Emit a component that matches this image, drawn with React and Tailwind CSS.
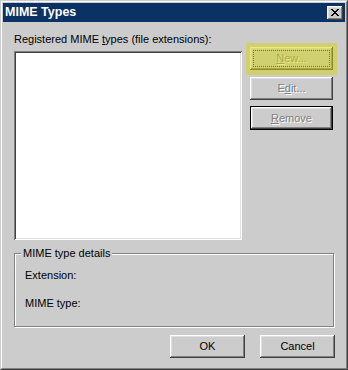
import React from 'react';

const font = { fontFamily: '"Liberation Sans", Arial, sans-serif' };

const Btn = ({ children, isDefault, disabled, focus, className = '' }) => {
  const face = (
    <div className="h-full w-full shadow-[inset_-1px_-1px_0_#404040,inset_1px_1px_0_#ffffff,inset_-2px_-2px_0_#808080,inset_2px_2px_0_#dfdfdf] flex items-center justify-center relative">
      {focus && <div className="absolute inset-[3px] border border-dotted border-[#222]" />}
      <span
        className={
          disabled
            ? 'text-[#808080] [text-shadow:1px_1px_0_#ffffff]'
            : 'text-black'
        }
      >
        {children}
      </span>
    </div>
  );
  return (
    <div className={`${isDefault ? 'border border-black' : ''} bg-[#cccccc] text-[11px] ${className}`}>
      {face}
    </div>
  );
};

export default function App() {
  return (
    <div style={font} className="w-[348px] h-[370px] bg-[#cccccc] border border-t-[#cccccc] border-l-[#cccccc] border-b-[#404040] border-r-[#404040]">
      <div className="h-full border border-t-white border-l-white border-b-[#808080] border-r-[#808080] p-px flex flex-col">
        {/* Title bar */}
        <div className="h-[19px] bg-[#0b3265] flex items-center justify-between pl-[2px] pr-[2px]">
          <span className="text-white font-bold text-[12.5px] leading-none">MIME Types</span>
          <div className="w-[16px] h-[14px] bg-[#cccccc] shadow-[inset_-1px_-1px_0_#404040,inset_1px_1px_0_#ffffff,inset_-2px_-2px_0_#808080,inset_2px_2px_0_#dfdfdf] flex items-center justify-center">
            <svg width="8" height="7" viewBox="0 0 8 7" shapeRendering="crispEdges">
              <path
                d="M0 0h2v1h-2zM6 0h2v1h-2zM1 1h2v1h-2zM5 1h2v1h-2zM2 2h4v1h-4zM3 3h2v1h-2zM2 4h4v1h-4zM1 5h2v1h-2zM5 5h2v1h-2zM0 6h2v1h-2zM6 6h2v1h-2z"
                fill="#000"
              />
            </svg>
          </div>
        </div>

        {/* Body */}
        <div className="flex-1 px-[11px] pt-[11px] text-[11px] text-black">
          <div className="flex items-start gap-[8px]">
            <div className="w-[228px]">
              <div className="h-[13px] leading-[13px]">
                Registered MIME <u>t</u>ypes (file extensions):
              </div>
              <div className="mt-[5px] h-[189px] bg-white shadow-[inset_1px_1px_0_#808080,inset_-1px_-1px_0_#ffffff,inset_2px_2px_0_#404040,inset_-2px_-2px_0_#dfdfdf]" />
            </div>

            <div className="w-[83px] flex flex-col mt-[14px]">
              <div className="relative">
                <Btn disabled focus className="h-[23px]">
                  <u>N</u>ew...
                </Btn>
                <div className="absolute -inset-[4px] bottom-[-5px] bg-[rgba(212,212,20,0.5)] pointer-events-none" />
              </div>
              <Btn disabled className="h-[23px] mt-[7px]">
                E<u>d</u>it...
              </Btn>
              <Btn disabled isDefault className="h-[24px] mt-[6px]">
                <u>R</u>emove
              </Btn>
            </div>
          </div>

          {/* Group box */}
          <div className="relative mt-[13px] h-[74px] border border-[#808080] shadow-[inset_1px_1px_0_#ffffff,1px_1px_0_#ffffff] pl-[10px] pt-[15px]">
            <span className="absolute -top-[7px] left-[6px] px-[2px] bg-[#cccccc] leading-[13px]">
              MIME type details
            </span>
            <div className="leading-[13px]">Extension:</div>
            <div className="leading-[13px] mt-[15px]">MIME type:</div>
          </div>

          <div className="flex justify-end gap-[15px] mt-[8px]">
            <Btn className="w-[75px] h-[23px]">OK</Btn>
            <Btn className="w-[75px] h-[23px] -mr-[1px]">Cancel</Btn>
          </div>
        </div>
      </div>
    </div>
  );
}
